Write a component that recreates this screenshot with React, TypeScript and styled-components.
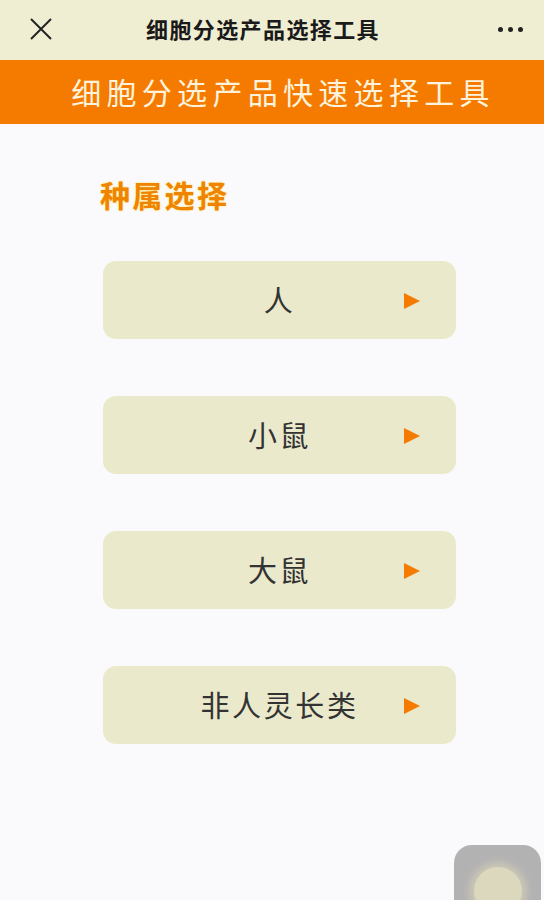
import React from "react";
import styled, { createGlobalStyle } from "styled-components";

const GlobalStyle = createGlobalStyle`
  html, body {
    margin: 0;
    padding: 0;
    background: #fafafc;
    font-family: "Noto Sans CJK SC", "Noto Sans", sans-serif;
  }
`;

const species = ["人", "小鼠", "大鼠", "非人灵长类"];

export default function App() {
  return (
    <Page>
      <GlobalStyle />
      <NavBar>
        <NavIcon>
          <svg width="24" height="24" viewBox="0 0 24 24">
            <path d="M2 2 L22 22 M22 2 L2 22" stroke="#222" strokeWidth="2" fill="none" />
          </svg>
        </NavIcon>
        <NavTitle>细胞分选产品选择工具</NavTitle>
        <NavIcon>
          <Dots>
            <i />
            <i />
            <i />
          </Dots>
        </NavIcon>
      </NavBar>
      <Banner>细胞分选产品快速选择工具</Banner>
      <Content>
        <SectionTitle>种属选择</SectionTitle>
        <List>
          {species.map((s) => (
            <Option key={s}>
              <OptionLabel>{s}</OptionLabel>
              <Arrow />
            </Option>
          ))}
        </List>
      </Content>
      <FloatBall>
        <BallInner />
      </FloatBall>
    </Page>
  );
}

const Page = styled.div`
  position: relative;
  height: 900px;
  overflow: hidden;
  background: #fafafc;
`;

const NavBar = styled.div`
  height: 60px;
  background: #efeed3;
  display: grid;
  grid-template-columns: 82px 1fr 82px;
  align-items: center;
`;

const NavIcon = styled.div`
  display: flex;
  justify-content: center;
  align-items: center;
  padding-bottom: 2px;
`;

const NavTitle = styled.div`
  text-align: center;
  font-size: 22px;
  font-weight: 600;
  letter-spacing: 1.4px;
  color: #1a1a1a;
  padding-right: 18px;
  padding-bottom: 4px;
`;

const Dots = styled.div`
  display: flex;
  gap: 5px;
  margin-left: 14px;
  i {
    width: 5px;
    height: 5px;
    border-radius: 50%;
    background: #222;
  }
`;

const Banner = styled.div`
  height: 64px;
  background: #f57a00;
  color: #fdf2dc;
  display: flex;
  align-items: center;
  justify-content: center;
  font-size: 30px;
  letter-spacing: 5.3px;
  padding-left: 22px;
  padding-bottom: 2px;
  box-sizing: border-box;
`;

const Content = styled.div`
  padding: 50px 0 0 100px;
`;

const SectionTitle = styled.div`
  font-size: 30px;
  font-weight: 700;
  letter-spacing: 2.3px;
  color: #ef8400;
  text-shadow: 0 0 2px #ffd84a;
  line-height: 40px;
`;

const List = styled.div`
  margin-top: 47px;
  margin-left: 3px;
  display: flex;
  flex-direction: column;
  gap: 57px;
`;

const Option = styled.div`
  width: 353px;
  height: 78px;
  border-radius: 13px;
  background: #ebe9cb;
  display: flex;
  align-items: center;
  justify-content: center;
  position: relative;
`;

const OptionLabel = styled.span`
  font-size: 29px;
  color: #333;
  letter-spacing: 2.6px;
  padding-bottom: 2px;
`;

const Arrow = styled.span`
  position: absolute;
  left: 301px;
  top: 32px;
  width: 0;
  height: 0;
  border-top: 8.5px solid transparent;
  border-bottom: 8.5px solid transparent;
  border-left: 16px solid #f57a00;
`;

const FloatBall = styled.div`
  position: absolute;
  left: 454px;
  top: 845px;
  width: 87px;
  height: 87px;
  border-radius: 18px;
  background: #b3b2b3;
  display: flex;
  align-items: center;
  justify-content: center;
`;

const BallInner = styled.div`
  width: 48px;
  height: 48px;
  border-radius: 50%;
  background: #dcd8bd;
  box-shadow: 0 0 8px 4px #cfcbb6;
  margin-top: 4px;
`;
